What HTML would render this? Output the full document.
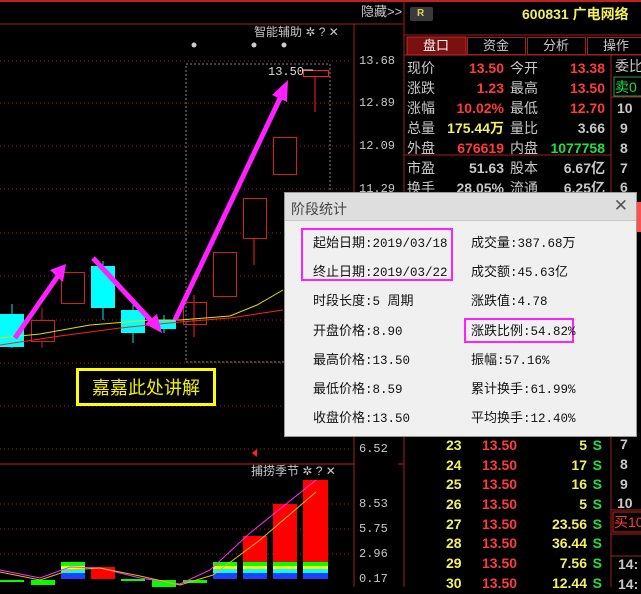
<!DOCTYPE html>
<html><head><meta charset="utf-8">
<style>
*{margin:0;padding:0;box-sizing:border-box}
body{width:641px;height:587px;background:#000;position:relative;overflow:hidden;font-family:"Liberation Sans","Noto Sans CJK SC",sans-serif}
.t{position:absolute;white-space:nowrap;line-height:1}
.g{color:#c8c8c8}
.r{color:#ff3c3c}
.y{color:#f0f060}
.gr{color:#20e040}
.b{font-weight:bold}
.dlg{position:absolute;left:284px;top:192px;width:353px;height:245px;background:#f0f0f0;border:1px solid #9a9a9a}
.dlg .tt{height:28px;background:#dedede;border-bottom:1px solid #c8c8c8;font-size:14px;color:#444;padding:6px 0 0 6px}
.dlg .t{font-size:12.5px;color:#111;font-family:"Liberation Mono","Noto Sans CJK SC",monospace}
.dlg .t i{font-style:normal;font-size:13px;font-family:"Noto Sans CJK SC",sans-serif}
</style></head><body>
<svg width="641" height="587" style="position:absolute;left:0;top:0">
<line x1="0" y1="1" x2="641" y2="1" stroke="#c02020" stroke-width="2"/>
<line x1="0" y1="24" x2="403" y2="24" stroke="#a02020"/>
<line x1="354" y1="24" x2="354" y2="587" stroke="#a02020"/>
<line x1="404" y1="0" x2="404" y2="587" stroke="#a02020"/>
<line x1="0" y1="464" x2="354" y2="464" stroke="#c02020"/>
<line x1="398" y1="464" x2="404" y2="464" stroke="#c02020"/>
<g stroke="#a02020" stroke-dasharray="1,3">
<line x1="0" y1="61" x2="352" y2="61"/><line x1="0" y1="103" x2="352" y2="103"/>
<line x1="0" y1="146" x2="352" y2="146"/><line x1="0" y1="189" x2="352" y2="189"/>
<line x1="0" y1="233" x2="352" y2="233"/><line x1="0" y1="276" x2="352" y2="276"/>
<line x1="0" y1="320" x2="352" y2="320"/><line x1="0" y1="363" x2="352" y2="363"/>
<line x1="0" y1="406" x2="352" y2="406"/><line x1="0" y1="449" x2="352" y2="449"/>
<line x1="0" y1="504" x2="352" y2="504"/><line x1="0" y1="529" x2="352" y2="529"/>
<line x1="0" y1="554" x2="352" y2="554"/>
</g>
<rect x="186" y="64" width="144" height="298" fill="none" stroke="#888" stroke-dasharray="2,2"/>
<line x1="12" y1="304" x2="12" y2="348" stroke="#00e8e8"/>
<rect x="0" y="314" width="24" height="33" fill="#00ffff"/>
<line x1="42" y1="308" x2="42" y2="348" stroke="#d02020"/>
<rect x="31.5" y="320.5" width="23" height="21" fill="#000" stroke="#d02020"/>
<rect x="61.5" y="272.5" width="23" height="31" fill="#000" stroke="#d02020"/>
<line x1="103" y1="261" x2="103" y2="320" stroke="#00e8e8"/>
<rect x="91" y="266" width="24" height="42" fill="#00ffff"/>
<line x1="133" y1="305" x2="133" y2="343" stroke="#00e8e8"/>
<rect x="121" y="310" width="24" height="23" fill="#00ffff"/>
<line x1="164" y1="315" x2="164" y2="333" stroke="#00e8e8"/>
<rect x="158" y="320" width="18" height="9" fill="#00ffff"/>
<line x1="194" y1="295" x2="194" y2="337" stroke="#ff2020"/>
<rect x="183.5" y="302.5" width="23" height="22" fill="none" stroke="#d02020"/>
<rect x="213.5" y="252.5" width="23" height="44" fill="#000" stroke="#d02020"/>
<line x1="254" y1="238" x2="254" y2="265" stroke="#ff2020"/>
<rect x="243.5" y="198.5" width="23" height="40" fill="#000" stroke="#d02020"/>
<rect x="273.5" y="137.5" width="23" height="37" fill="#000" stroke="#d02020"/>
<line x1="315" y1="76" x2="315" y2="112" stroke="#ff2020"/>
<rect x="303.5" y="70.5" width="25" height="6" fill="#000" stroke="#ff2020"/>
<polyline points="0,338 40,334 90,325 150,320 180,320 230,316 257,305 283,290" fill="none" stroke="#e0e000" stroke-width="1"/>
<polyline points="0,345 60,336 120,328 180,322 230,318 283,310" fill="none" stroke="#ff2020" stroke-width="1"/>
<g fill="#ff20ff" stroke="#ff20ff">
<line x1="15" y1="338" x2="60" y2="273" stroke-width="5"/>
<polygon points="66,264 50,270 63,282" stroke="none"/>
<line x1="93" y1="258" x2="156" y2="326" stroke-width="5"/>
<polygon points="162,333 145,324 157,314" stroke="none"/>
<line x1="175" y1="320" x2="283" y2="92" stroke-width="5"/>
<polygon points="288,80 272,95 287,102" stroke="none"/>
</g>
<text x="268" y="75" fill="#ddd" font-size="12" font-family="Liberation Mono,monospace">13.50</text>
<line x1="302" y1="70" x2="313" y2="70" stroke="#ddd"/>
<polygon points="252,453 257,449 257,457" fill="#ff2020"/>
<g fill="#ccc"><circle cx="194" cy="45" r="2.5"/><circle cx="254" cy="45" r="2.5"/><circle cx="284" cy="45" r="2.5"/></g>
<g>
<rect x="61" y="562" width="24" height="4" fill="#00ff00"/><rect x="61" y="566" width="24" height="3" fill="#ffff00"/><rect x="61" y="569" width="24" height="4" fill="#00ffff"/><rect x="61" y="573" width="24" height="6" fill="#2040ff"/>
<rect x="91" y="567" width="24" height="12" fill="#ff0000"/>
<rect x="0" y="580" width="24" height="2" fill="#00ff00"/>
<rect x="31" y="580" width="24" height="5" fill="#00ff00"/>
<rect x="121" y="579" width="24" height="2" fill="#00ff00"/>
<rect x="152" y="580" width="24" height="7" fill="#00ff00"/>
<rect x="183" y="580" width="24" height="3" fill="#00ff00"/>
<rect x="213" y="562" width="24" height="4" fill="#00ff00"/><rect x="213" y="566" width="24" height="3" fill="#ffff00"/><rect x="213" y="569" width="24" height="4" fill="#00ffff"/><rect x="213" y="573" width="24" height="6" fill="#2040ff"/>
<rect x="243" y="536" width="24" height="26" fill="#ff0000"/><rect x="243" y="562" width="24" height="4" fill="#00ff00"/><rect x="243" y="566" width="24" height="3" fill="#ffff00"/><rect x="243" y="569" width="24" height="4" fill="#00ffff"/><rect x="243" y="573" width="24" height="6" fill="#2040ff"/>
<rect x="273" y="504" width="24" height="58" fill="#ff0000"/><rect x="273" y="562" width="24" height="4" fill="#00ff00"/><rect x="273" y="566" width="24" height="3" fill="#ffff00"/><rect x="273" y="569" width="24" height="4" fill="#00ffff"/><rect x="273" y="573" width="24" height="6" fill="#2040ff"/>
<rect x="303" y="480" width="25" height="82" fill="#ff0000"/><rect x="303" y="562" width="25" height="4" fill="#00ff00"/><rect x="303" y="566" width="25" height="3" fill="#ffff00"/><rect x="303" y="569" width="25" height="4" fill="#00ffff"/><rect x="303" y="573" width="25" height="6" fill="#2040ff"/>
</g>
<polyline points="0,570 40,578 70,567 100,568 140,578 180,584 210,570 250,533 316,480" fill="none" stroke="#ff30ff"/>
<polyline points="0,572 40,580 70,570 100,568 140,576 180,585 213,575 260,540 316,492" fill="none" stroke="#e0c000"/>
<line x1="404" y1="35" x2="641" y2="35" stroke="#a02020"/>
<line x1="404" y1="55" x2="641" y2="55" stroke="#a02020"/>
<line x1="404" y1="155" x2="611" y2="155" stroke="#a02020"/>
<line x1="611" y1="55" x2="611" y2="587" stroke="#a02020"/>
<line x1="611" y1="97" x2="641" y2="97" stroke="#a02020"/>
<line x1="611" y1="510" x2="641" y2="510" stroke="#a02020"/>
<line x1="611" y1="534" x2="641" y2="534" stroke="#a02020"/>
<line x1="611" y1="556" x2="641" y2="556" stroke="#a02020"/>
<rect x="407" y="37" width="59" height="18" fill="#7a1010" stroke="#c03030"/>
<rect x="467.5" y="37.5" width="58" height="17" fill="#000" stroke="#a02020"/>
<rect x="527.5" y="37.5" width="58" height="17" fill="#000" stroke="#a02020"/>
<rect x="587.5" y="37.5" width="58" height="17" fill="#000" stroke="#a02020"/>
<rect x="410" y="7" width="23" height="14" rx="2" fill="#3a3a3a"/>
<rect x="614" y="77" width="30" height="19" fill="none" stroke="#20a040"/>
<rect x="613" y="512" width="30" height="20" fill="none" stroke="#d02020"/>
<rect x="612" y="202" width="29" height="30" fill="#ff5050"/>
</svg>

<div class="t g" style="left:361px;top:5px;font-size:13px">隐藏&gt;&gt;</div>
<div class="t g" style="left:254px;top:26px;font-size:12px">智能辅助 ✲ ? ✕</div>
<div class="t g" style="left:251px;top:465px;font-size:12px">捕捞季节 ✲ ? ✕</div>
<div class="t g" style="left:359px;top:55px;font-size:12px;font-family:'Liberation Mono',monospace">13.68</div>
<div class="t g" style="left:359px;top:97px;font-size:12px;font-family:'Liberation Mono',monospace">12.89</div>
<div class="t g" style="left:359px;top:140px;font-size:12px;font-family:'Liberation Mono',monospace">12.09</div>
<div class="t g" style="left:359px;top:183px;font-size:12px;font-family:'Liberation Mono',monospace">11.29</div>
<div class="t g" style="left:359px;top:443px;font-size:12px;font-family:'Liberation Mono',monospace">6.52</div>
<div class="t g" style="left:359px;top:498px;font-size:12px;font-family:'Liberation Mono',monospace">8.53</div>
<div class="t g" style="left:359px;top:523px;font-size:12px;font-family:'Liberation Mono',monospace">5.75</div>
<div class="t g" style="left:359px;top:548px;font-size:12px;font-family:'Liberation Mono',monospace">2.96</div>
<div class="t g" style="left:359px;top:573px;font-size:12px;font-family:'Liberation Mono',monospace">0.17</div>

<div style="position:absolute;left:76px;top:368px;width:140px;height:38px;border:3px solid #ffff00;color:#f0f000;font-size:18px;text-align:center;line-height:32px;font-family:'Noto Sans CJK SC',sans-serif">嘉嘉此处讲解</div>

<div class="t b" style="left:417px;top:9px;font-size:10px;color:#e0d060">R</div>
<div class="t y b" style="left:522px;top:7px;font-size:14px">600831 广电网络</div>
<div class="t g" style="left:423px;top:39px;font-size:13px;color:#fff">盘口</div>
<div class="t g" style="left:483px;top:39px;font-size:13px">资金</div>
<div class="t g" style="left:543px;top:39px;font-size:13px">分析</div>
<div class="t g" style="left:603px;top:39px;font-size:13px">操作</div>

<div style="position:absolute;left:407px;top:58px;width:200px;font-size:14px;line-height:20px">
<div style="position:relative;height:20px"><span class="g">现价</span><span class="r b" style="position:absolute;right:103px">13.50</span><span class="g" style="position:absolute;left:103px">今开</span><span class="r b" style="position:absolute;right:2px">13.38</span></div>
<div style="position:relative;height:20px"><span class="g">涨跌</span><span class="r b" style="position:absolute;right:103px">1.23</span><span class="g" style="position:absolute;left:103px">最高</span><span class="r b" style="position:absolute;right:2px">13.50</span></div>
<div style="position:relative;height:20px"><span class="g">涨幅</span><span class="r b" style="position:absolute;right:103px">10.02%</span><span class="g" style="position:absolute;left:103px">最低</span><span class="r b" style="position:absolute;right:2px">12.70</span></div>
<div style="position:relative;height:20px"><span class="g">总量</span><span class="y b" style="position:absolute;right:103px">175.44万</span><span class="g" style="position:absolute;left:103px">量比</span><span class="g b" style="position:absolute;right:2px">3.66</span></div>
<div style="position:relative;height:20px"><span class="g">外盘</span><span class="r b" style="position:absolute;right:103px">676619</span><span class="g" style="position:absolute;left:103px">内盘</span><span class="gr b" style="position:absolute;right:2px">1077758</span></div>
<div style="position:relative;height:20px"><span class="g">市盈</span><span class="g b" style="position:absolute;right:103px">51.63</span><span class="g" style="position:absolute;left:103px">股本</span><span class="g b" style="position:absolute;right:2px">6.67亿</span></div>
<div style="position:relative;height:20px"><span class="g">换手</span><span class="g b" style="position:absolute;right:103px">28.05%</span><span class="g" style="position:absolute;left:103px">流通</span><span class="g b" style="position:absolute;right:2px">6.25亿</span></div>
</div>
<div class="t g" style="left:615px;top:59px;font-size:14px">委比</div>
<div class="t gr" style="left:615px;top:80px;font-size:14px">卖0</div>
<div class="t g b" style="left:617px;top:101px;font-size:14px">10</div>
<div class="t g b" style="left:620px;top:121px;font-size:14px">9</div>
<div class="t g b" style="left:620px;top:141px;font-size:14px">8</div>
<div class="t g b" style="left:620px;top:161px;font-size:14px">7</div>
<div class="t g b" style="left:620px;top:180px;font-size:14px">6</div>

<div style="position:absolute;left:430px;top:436px;width:175px;font-size:14px;line-height:19.7px" class="b">
<div style="position:relative;height:19.7px"><span class="y" style="position:absolute;left:16px">23</span><span class="r" style="position:absolute;left:52px">13.50</span><span class="y" style="position:absolute;right:18px">5</span><span class="gr" style="position:absolute;right:3px">S</span></div>
<div style="position:relative;height:19.7px"><span class="y" style="position:absolute;left:16px">24</span><span class="r" style="position:absolute;left:52px">13.50</span><span class="y" style="position:absolute;right:18px">17</span><span class="gr" style="position:absolute;right:3px">S</span></div>
<div style="position:relative;height:19.7px"><span class="y" style="position:absolute;left:16px">25</span><span class="r" style="position:absolute;left:52px">13.50</span><span class="y" style="position:absolute;right:18px">16</span><span class="gr" style="position:absolute;right:3px">S</span></div>
<div style="position:relative;height:19.7px"><span class="y" style="position:absolute;left:16px">26</span><span class="r" style="position:absolute;left:52px">13.50</span><span class="y" style="position:absolute;right:18px">5</span><span class="gr" style="position:absolute;right:3px">S</span></div>
<div style="position:relative;height:19.7px"><span class="y" style="position:absolute;left:16px">27</span><span class="r" style="position:absolute;left:52px">13.50</span><span class="y" style="position:absolute;right:18px">23.56</span><span class="gr" style="position:absolute;right:3px">S</span></div>
<div style="position:relative;height:19.7px"><span class="y" style="position:absolute;left:16px">28</span><span class="r" style="position:absolute;left:52px">13.50</span><span class="y" style="position:absolute;right:18px">36.44</span><span class="gr" style="position:absolute;right:3px">S</span></div>
<div style="position:relative;height:19.7px"><span class="y" style="position:absolute;left:16px">29</span><span class="r" style="position:absolute;left:52px">13.50</span><span class="y" style="position:absolute;right:18px">7.56</span><span class="gr" style="position:absolute;right:3px">S</span></div>
<div style="position:relative;height:19.7px"><span class="y" style="position:absolute;left:16px">30</span><span class="r" style="position:absolute;left:52px">13.50</span><span class="y" style="position:absolute;right:18px">12.44</span><span class="gr" style="position:absolute;right:3px">S</span></div>
</div>
<div class="t g b" style="left:620px;top:437px;font-size:14px">7</div>
<div class="t g b" style="left:620px;top:457px;font-size:14px">8</div>
<div class="t g b" style="left:620px;top:477px;font-size:14px">9</div>
<div class="t g b" style="left:617px;top:496px;font-size:14px">10</div>
<div class="t r" style="left:614px;top:515px;font-size:14px">买10</div>
<div class="t g b" style="left:618px;top:557px;font-size:14px">14:</div>
<div class="t g b" style="left:618px;top:577px;font-size:14px">14:</div>

<div class="dlg">
<div class="tt">阶段统计<span style="position:absolute;right:8px;top:3px;font-size:17px;color:#555">✕</span></div>
<div style="position:absolute;left:16px;top:35px;width:152px;height:53px;border:2px solid #ff20ff"></div>
<div style="position:absolute;left:179px;top:125px;width:110px;height:25px;border:2px solid #ff20ff"></div>
<div class="t" style="left:28px;top:42px"><i>起始日期</i>:2019/03/18</div>
<div class="t" style="left:28px;top:71px"><i>终止日期</i>:2019/03/22</div>
<div class="t" style="left:28px;top:100px"><i>时段长度</i>:5 <i>周期</i></div>
<div class="t" style="left:28px;top:130px"><i>开盘价格</i>:8.90</div>
<div class="t" style="left:28px;top:159px"><i>最高价格</i>:13.50</div>
<div class="t" style="left:28px;top:188px"><i>最低价格</i>:8.59</div>
<div class="t" style="left:28px;top:217px"><i>收盘价格</i>:13.50</div>
<div class="t" style="left:186px;top:42px"><i>成交量</i>:387.68<i>万</i></div>
<div class="t" style="left:186px;top:71px"><i>成交额</i>:45.63<i>亿</i></div>
<div class="t" style="left:186px;top:100px"><i>涨跌值</i>:4.78</div>
<div class="t" style="left:186px;top:130px"><i>涨跌比例</i>:54.82%</div>
<div class="t" style="left:186px;top:159px"><i>振幅</i>:57.16%</div>
<div class="t" style="left:186px;top:188px"><i>累计换手</i>:61.99%</div>
<div class="t" style="left:186px;top:217px"><i>平均换手</i>:12.40%</div>
</div>
</body></html>
